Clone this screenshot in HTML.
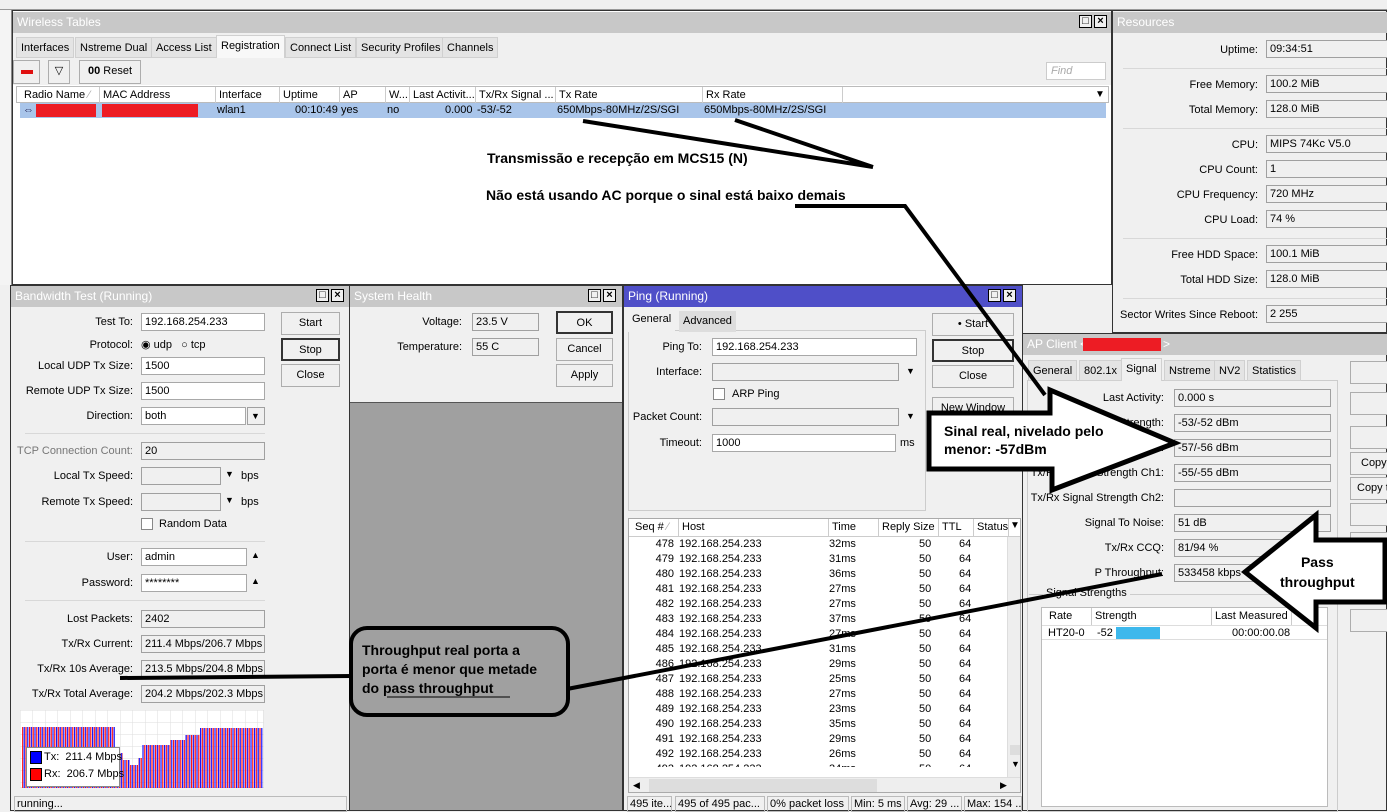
<!DOCTYPE html>
<html><head><meta charset="utf-8"><style>
*{box-sizing:border-box;margin:0;padding:0}
body{width:1387px;height:811px;position:relative;overflow:hidden;background:#f0f0f0;font-family:"Liberation Sans",sans-serif;font-size:11px;color:#000}
div,span{position:absolute;white-space:nowrap}
.t{background:#c8c8c8;color:#fff;font-size:12px;padding:3px 4px;height:21px}
.w{background:#f0f0f0}
.f{height:18px;border:1px solid #a0a0a0;background:#f0f0f0;padding:1px 3px;line-height:14px;overflow:hidden}
.fw{background:#fff;border-color:#a8a8a8}
.l{text-align:right;line-height:18px}
.b{border:1px solid #adadad;background:#f0f0f0;text-align:center;line-height:20px;height:23px}
.bd{border:2px solid #333}
.tab{border:1px solid #d0d0d0;background:#e4e4e4;height:21px;line-height:20px;padding:0 4px}
.ta{background:#f8f8f8;border-bottom:none;height:23px;top:-2px}
.sep{height:1px;background:#d8d8d8}
.hd{border-right:1px solid #ccc;padding-left:3px;line-height:16px;height:17px}
.ctl{border:1px solid #000;width:13px;height:13px;background:#f0f0f0;font-size:11px;line-height:11px;text-align:center;font-weight:bold}
.ann{font-weight:bold;font-size:14px;color:#000}
.row{height:15px;line-height:15px;left:0;width:380px}
</style></head><body>
<div style="left:0;top:0;width:1387px;height:10px;background:#f0f0f0;border-bottom:1px solid #999"></div>
<div style="left:0;top:10px;width:12px;height:275px;background:#f4f4f4;border-right:1px solid #888"></div>

<!-- Wireless Tables -->
<div style="left:12px;top:10px;width:1100px;height:275px;background:#fff;border:1px solid #333">
 <div class="t" style="left:0;top:1px;width:1098px">Wireless Tables</div>
 <div class="ctl" style="left:1066px;top:4px">□</div><div class="ctl" style="left:1081px;top:4px">×</div>
 <div class="w" style="left:0;top:22px;width:1098px;height:52px"></div>
 <div class="tab" style="left:3px;top:26px">Interfaces</div>
 <div class="tab" style="left:62px;top:26px">Nstreme Dual</div>
 <div class="tab" style="left:138px;top:26px">Access List</div>
 <div class="tab ta" style="left:203px;top:24px">Registration</div>
 <div class="tab" style="left:272px;top:26px">Connect List</div>
 <div class="tab" style="left:343px;top:26px">Security Profiles</div>
 <div class="tab" style="left:429px;top:26px">Channels</div>
 <div class="b" style="left:0;top:49px;width:27px;height:24px"><span style="left:7px;top:9px;width:12px;height:4px;background:#e01010"></span></div>
 <div class="b" style="left:35px;top:49px;width:22px;height:24px">▽</div>
 <div class="b" style="left:66px;top:49px;width:62px;height:24px"><b>00</b> Reset</div>
 <div style="left:1033px;top:51px;width:60px;height:18px;border:1px solid #ccc;background:#fff;color:#aaa;font-style:italic;padding-left:4px;line-height:16px">Find</div>
 <div style="left:3px;top:75px;width:1093px;height:17px;border:1px solid #bbb;background:#fff">
  <div class="hd" style="left:4px;width:79px">Radio Name <span style="color:#aaa;position:static">⁄</span></div>
  <div class="hd" style="left:83px;width:116px">MAC Address</div>
  <div class="hd" style="left:199px;width:64px">Interface</div>
  <div class="hd" style="left:263px;width:60px">Uptime</div>
  <div class="hd" style="left:323px;width:46px">AP</div>
  <div class="hd" style="left:369px;width:24px">W...</div>
  <div class="hd" style="left:393px;width:66px">Last Activit...</div>
  <div class="hd" style="left:459px;width:80px">Tx/Rx Signal ...</div>
  <div class="hd" style="left:539px;width:147px">Tx Rate</div>
  <div class="hd" style="left:686px;width:140px">Rx Rate</div>
  <div style="left:1078px;top:0;font-size:10px;line-height:16px">▼</div>
 </div>
 <div style="left:7px;top:92px;width:1086px;height:15px;background:#a9c5ea;line-height:15px">
  <span style="left:3px;color:#225">⇔</span>
  <span style="left:16px;top:1px;width:60px;height:13px;background:#ed1c24"></span>
  <span style="left:82px;top:1px;width:96px;height:13px;background:#ed1c24"></span>
  <span style="left:197px">wlan1</span><span style="left:275px">00:10:49</span><span style="left:321px">yes</span><span style="left:367px">no</span>
  <span style="left:425px">0.000</span><span style="left:457px">-53/-52</span><span style="left:537px">650Mbps-80MHz/2S/SGI</span><span style="left:684px">650Mbps-80MHz/2S/SGI</span>
 </div>
</div>

<!-- Resources -->
<div style="left:1112px;top:10px;width:275px;height:323px;background:#f0f0f0;border:1px solid #333">
 <div class="t" style="left:0;top:1px;width:275px">Resources</div>
 <div class="l" style="left:0;width:145px;top:30px">Uptime:</div><div class="f" style="left:153px;top:29px;width:130px">09:34:51</div>
 <div class="sep" style="left:10px;top:57px;width:265px"></div>
 <div class="l" style="left:0;width:145px;top:65px">Free Memory:</div><div class="f" style="left:153px;top:64px;width:130px">100.2 MiB</div>
 <div class="l" style="left:0;width:145px;top:90px">Total Memory:</div><div class="f" style="left:153px;top:89px;width:130px">128.0 MiB</div>
 <div class="sep" style="left:10px;top:117px;width:265px"></div>
 <div class="l" style="left:0;width:145px;top:125px">CPU:</div><div class="f" style="left:153px;top:124px;width:130px">MIPS 74Kc V5.0</div>
 <div class="l" style="left:0;width:145px;top:150px">CPU Count:</div><div class="f" style="left:153px;top:149px;width:130px">1</div>
 <div class="l" style="left:0;width:145px;top:175px">CPU Frequency:</div><div class="f" style="left:153px;top:174px;width:130px">720 MHz</div>
 <div class="l" style="left:0;width:145px;top:200px">CPU Load:</div><div class="f" style="left:153px;top:199px;width:130px">74 %</div>
 <div class="sep" style="left:10px;top:227px;width:265px"></div>
 <div class="l" style="left:0;width:145px;top:235px">Free HDD Space:</div><div class="f" style="left:153px;top:234px;width:130px">100.1 MiB</div>
 <div class="l" style="left:0;width:145px;top:260px">Total HDD Size:</div><div class="f" style="left:153px;top:259px;width:130px">128.0 MiB</div>
 <div class="sep" style="left:10px;top:287px;width:265px"></div>
 <div class="l" style="left:0;width:145px;top:295px">Sector Writes Since Reboot:</div><div class="f" style="left:153px;top:294px;width:130px">2 255</div>
</div>

<!-- Bandwidth Test -->
<div style="left:10px;top:285px;width:340px;height:526px;background:#f0f0f0;border:1px solid #333">
 <div class="t" style="left:0;top:0;width:338px">Bandwidth Test (Running)</div>
 <div class="ctl" style="left:305px;top:3px">□</div><div class="ctl" style="left:320px;top:3px">×</div>
 <div class="l" style="left:0;width:122px;top:27px">Test To:</div><div class="f fw" style="left:130px;top:27px;width:124px">192.168.254.233</div>
 <div class="l" style="left:0;width:122px;top:50px">Protocol:</div><span style="left:130px;top:52px">◉ udp &nbsp;&nbsp;○ tcp</span>
 <div class="l" style="left:0;width:122px;top:71px">Local UDP Tx Size:</div><div class="f fw" style="left:130px;top:71px;width:124px">1500</div>
 <div class="l" style="left:0;width:122px;top:96px">Remote UDP Tx Size:</div><div class="f fw" style="left:130px;top:96px;width:124px">1500</div>
 <div class="l" style="left:0;width:122px;top:121px">Direction:</div><div class="f fw" style="left:130px;top:121px;width:105px">both</div><div class="f" style="left:236px;top:121px;width:18px;font-size:9px">▼</div>
 <div class="sep" style="left:14px;top:147px;width:240px"></div>
 <div class="l" style="left:0;width:122px;top:156px;color:#777">TCP Connection Count:</div><div class="f" style="left:130px;top:156px;width:124px">20</div>
 <div class="l" style="left:0;width:122px;top:181px">Local Tx Speed:</div><div class="f" style="left:130px;top:181px;width:80px"></div><span style="left:214px;top:183px;font-size:9px">▼</span><span style="left:230px;top:184px">bps</span>
 <div class="l" style="left:0;width:122px;top:207px">Remote Tx Speed:</div><div class="f" style="left:130px;top:207px;width:80px"></div><span style="left:214px;top:209px;font-size:9px">▼</span><span style="left:230px;top:210px">bps</span>
 <span style="left:130px;top:232px;width:12px;height:12px;border:1px solid #888;background:#fff"></span><span style="left:148px;top:232px">Random Data</span>
 <div class="sep" style="left:14px;top:255px;width:240px"></div>
 <div class="l" style="left:0;width:122px;top:262px">User:</div><div class="f fw" style="left:130px;top:262px;width:106px">admin</div><span style="left:240px;top:264px;font-size:9px">▲</span>
 <div class="l" style="left:0;width:122px;top:288px">Password:</div><div class="f fw" style="left:130px;top:288px;width:106px">********</div><span style="left:240px;top:290px;font-size:9px">▲</span>
 <div class="sep" style="left:14px;top:314px;width:240px"></div>
 <div class="l" style="left:0;width:122px;top:324px">Lost Packets:</div><div class="f" style="left:130px;top:324px;width:124px">2402</div>
 <div class="l" style="left:0;width:122px;top:349px">Tx/Rx Current:</div><div class="f" style="left:130px;top:349px;width:124px">211.4 Mbps/206.7 Mbps</div>
 <div class="l" style="left:0;width:122px;top:374px">Tx/Rx 10s Average:</div><div class="f" style="left:130px;top:374px;width:124px">213.5 Mbps/204.8 Mbps</div>
 <div class="l" style="left:0;width:122px;top:399px">Tx/Rx Total Average:</div><div class="f" style="left:130px;top:399px;width:124px">204.2 Mbps/202.3 Mbps</div>
 <div class="b" style="left:270px;top:26px;width:59px">Start</div>
 <div class="b bd" style="left:270px;top:52px;width:59px">Stop</div>
 <div class="b" style="left:270px;top:78px;width:59px">Close</div>
 <svg style="position:absolute;left:9px;top:424px" width="244" height="78">
  <defs><pattern id="g" width="12.5" height="12" patternUnits="userSpaceOnUse"><path d="M0 0V12M0 0H12.5" stroke="#ddd" fill="none"/></pattern>
  <pattern id="bars" width="3.6" height="78" patternUnits="userSpaceOnUse"><rect x="0" width="1.2" height="78" fill="#1010ff"/><rect x="1.8" width="1.2" height="78" fill="#ff1010"/></pattern></defs>
  <rect width="244" height="78" fill="#fff" stroke="#ccc"/><rect width="244" height="78" fill="url(#g)"/>
  <path d="M2 78V17H95V43H103V50H110V55H118V48H122V35H150V30H165V25H180V18H243V78Z" fill="url(#bars)"/>
 </svg>
 <div style="left:15px;top:461px;width:94px;height:40px;background:#fff;border:1px solid #888">
  <span style="left:3px;top:3px;width:12px;height:13px;background:#00f;border:1px solid #000"></span><span style="left:17px;top:3px">Tx:&nbsp; 211.4 Mbps</span>
  <span style="left:3px;top:20px;width:12px;height:13px;background:#f00;border:1px solid #000"></span><span style="left:17px;top:20px">Rx:&nbsp; 206.7 Mbps</span>
 </div>
 <div style="left:3px;top:510px;width:333px;height:16px;border:1px solid #bbb;padding-left:2px;line-height:14px">running...</div>
</div>

<!-- System Health -->
<div style="left:349px;top:285px;width:274px;height:526px;background:#a0a0a0;border:1px solid #333">
 <div class="w" style="left:0;top:0;width:272px;height:117px;border-bottom:1px solid #555"></div>
 <div class="t" style="left:0;top:0;width:272px">System Health</div>
 <div class="ctl" style="left:238px;top:3px">□</div><div class="ctl" style="left:253px;top:3px">×</div>
 <div class="l" style="left:0;width:112px;top:27px">Voltage:</div><div class="f" style="left:122px;top:27px;width:67px">23.5 V</div>
 <div class="l" style="left:0;width:112px;top:52px">Temperature:</div><div class="f" style="left:122px;top:52px;width:67px">55 C</div>
 <div class="b bd" style="left:206px;top:25px;width:57px">OK</div>
 <div class="b" style="left:206px;top:52px;width:57px">Cancel</div>
 <div class="b" style="left:206px;top:78px;width:57px">Apply</div>
</div>

<!-- Ping -->
<div style="left:623px;top:285px;width:400px;height:526px;background:#f0f0f0;border:1px solid #333">
 <div class="t" style="left:0;top:0;width:398px;background:#4f4fc8">Ping (Running)</div>
 <div class="ctl" style="left:364px;top:3px">□</div><div class="ctl" style="left:379px;top:3px">×</div>
 <div style="left:4px;top:44px;width:298px;height:181px;border:1px solid #ccc"></div>
 <div class="tab ta" style="left:4px;top:23px;background:#f0f0f0;border:none">General</div>
 <div class="tab" style="left:55px;top:25px;border:none;background:#ddd">Advanced</div>
 <div class="l" style="left:0;width:78px;top:52px">Ping To:</div><div class="f fw" style="left:88px;top:52px;width:205px">192.168.254.233</div>
 <div class="l" style="left:0;width:78px;top:77px">Interface:</div><div class="f" style="left:88px;top:77px;width:187px"></div><span style="left:282px;top:80px;font-size:9px">▼</span>
 <span style="left:89px;top:102px;width:12px;height:12px;border:1px solid #888;background:#fff"></span><span style="left:108px;top:102px">ARP Ping</span>
 <div class="l" style="left:0;width:78px;top:122px">Packet Count:</div><div class="f" style="left:88px;top:122px;width:187px"></div><span style="left:282px;top:125px;font-size:9px">▼</span>
 <div class="l" style="left:0;width:78px;top:148px">Timeout:</div><div class="f fw" style="left:88px;top:148px;width:184px">1000</div><span style="left:276px;top:151px">ms</span>
 <div class="b" style="left:308px;top:27px;width:82px">• Start</div>
 <div class="b bd" style="left:308px;top:53px;width:82px">Stop</div>
 <div class="b" style="left:308px;top:79px;width:82px">Close</div>
 <div class="b" style="left:308px;top:111px;width:82px">New Window</div>
 <div style="left:4px;top:232px;width:393px;height:275px;background:#fff;border:1px solid #aaa;overflow:hidden">
  <div style="left:0;top:0;width:393px;height:18px;border-bottom:1px solid #ccc">
   <div class="hd" style="left:3px;width:47px">Seq # <span style="position:static;color:#aaa">⁄</span></div><div class="hd" style="left:50px;width:150px">Host</div><div class="hd" style="left:200px;width:50px">Time</div><div class="hd" style="left:250px;width:60px">Reply Size</div><div class="hd" style="left:310px;width:35px">TTL</div><div class="hd" style="left:345px;width:35px">Status</div><span style="left:381px;top:1px;font-size:10px">▼</span>
  </div>
  <div id="rows" style="left:0;top:18px;width:380px;height:230px;overflow:hidden"></div>
  <div style="left:378px;top:18px;width:15px;height:240px;background:#eee;border-left:1px solid #ddd"><span style="left:2px;top:208px;width:12px;height:10px;background:#ddd"></span><span style="left:3px;top:222px;font-size:9px">▼</span></div>
  <div style="left:0;top:258px;width:393px;height:17px;background:#eee;border-top:1px solid #ddd"><span style="left:4px;top:2px;font-size:9px">◀</span><span style="left:20px;top:1px;width:228px;height:14px;background:#ddd"></span><span style="left:371px;top:2px;font-size:9px">▶</span></div>
 </div>
 <div style="left:3px;top:510px;width:395px;height:16px;line-height:14px">
  <span style="left:0;width:45px;border:1px solid #bbb;height:16px;padding-left:2px;overflow:hidden">495 ite...</span>
  <span style="left:48px;width:90px;border:1px solid #bbb;height:16px;padding-left:2px">495 of 495 pac...</span>
  <span style="left:140px;width:82px;border:1px solid #bbb;height:16px;padding-left:2px">0% packet loss</span>
  <span style="left:224px;width:54px;border:1px solid #bbb;height:16px;padding-left:2px">Min: 5 ms</span>
  <span style="left:280px;width:55px;border:1px solid #bbb;height:16px;padding-left:2px;overflow:hidden">Avg: 29 ...</span>
  <span style="left:337px;width:58px;border:1px solid #bbb;height:16px;padding-left:2px;overflow:hidden">Max: 154 ...</span>
 </div>
</div>

<!-- AP Client -->
<div style="left:1022px;top:333px;width:365px;height:478px;background:#f0f0f0;border:1px solid #333">
 <div class="t" style="left:0;top:0;width:365px">AP Client &lt;<span style="left:60px;top:4px;width:78px;height:13px;background:#ed1c24"></span><span style="left:140px;top:3px">&gt;</span></div>
 <div style="left:4px;top:46px;width:311px;height:432px;border:1px solid #ccc"></div>
 <div class="tab" style="left:5px;top:26px">General</div><div class="tab" style="left:56px;top:26px">802.1x</div>
 <div class="tab ta" style="left:98px;top:24px;background:#f0f0f0">Signal</div>
 <div class="tab" style="left:141px;top:26px">Nstreme</div><div class="tab" style="left:191px;top:26px">NV2</div><div class="tab" style="left:224px;top:26px">Statistics</div>
 <div class="l" style="left:0;width:141px;top:55px">Last Activity:</div><div class="f" style="left:151px;top:55px;width:157px">0.000 s</div>
 <div class="l" style="left:0;width:141px;top:80px">Tx/Rx Signal Strength:</div><div class="f" style="left:151px;top:80px;width:157px">-53/-52 dBm</div>
 <div class="l" style="left:0;width:141px;top:105px">Signal Strength:</div><div class="f" style="left:151px;top:105px;width:157px">-57/-56 dBm</div>
 <div class="l" style="left:0;width:141px;top:130px">Tx/Rx Signal Strength Ch1:</div><div class="f" style="left:151px;top:130px;width:157px">-55/-55 dBm</div>
 <div class="l" style="left:0;width:141px;top:155px">Tx/Rx Signal Strength Ch2:</div><div class="f" style="left:151px;top:155px;width:157px"></div>
 <div class="l" style="left:0;width:141px;top:180px">Signal To Noise:</div><div class="f" style="left:151px;top:180px;width:157px">51 dB</div>
 <div class="l" style="left:0;width:141px;top:205px">Tx/Rx CCQ:</div><div class="f" style="left:151px;top:205px;width:157px">81/94 %</div>
 <div class="l" style="left:0;width:141px;top:230px">P Throughput:</div><div class="f" style="left:151px;top:230px;width:157px">533458 kbps</div>
 <div class="sep" style="left:6px;top:260px;width:300px;background:#ccc"></div>
 <span style="left:20px;top:253px;background:#f0f0f0;padding:0 3px">Signal Strengths</span>
 <div style="left:18px;top:273px;width:287px;height:200px;background:#fff;border:1px solid #bbb">
  <div class="hd" style="left:4px;width:46px">Rate</div><div class="hd" style="left:50px;width:120px">Strength</div><div class="hd" style="left:170px;width:80px">Last Measured</div>
  <div style="left:0;top:17px;width:285px;height:15px;border-top:1px solid #ddd;border-bottom:1px solid #ddd;line-height:14px"><span style="left:6px">HT20-0</span><span style="left:55px">-52</span><span style="left:74px;top:1px;width:44px;height:12px;background:#3db8ec"></span><span style="left:190px">00:00:00.08</span></div>
 </div>
 <div class="b" style="left:327px;top:27px;width:40px"></div>
 <div class="b" style="left:327px;top:58px;width:40px"></div>
 <div class="b" style="left:327px;top:92px;width:40px"></div>
 <div class="b" style="left:327px;top:118px;width:40px;text-align:left;padding-left:10px">Copy</div>
 <div class="b" style="left:327px;top:143px;width:40px;text-align:left;padding-left:6px">Copy t</div>
 <div class="b" style="left:327px;top:169px;width:40px"></div>
 <div class="b" style="left:327px;top:198px;width:40px"></div>
 <div class="b" style="left:327px;top:247px;width:40px"></div>
 <div class="b" style="left:327px;top:275px;width:40px"></div>
</div>

<!-- annotations -->
<svg style="position:absolute;left:0;top:0" width="1387" height="811">
 <path d="M583 121L873 167M735 120L873 167" stroke="#000" stroke-width="4" fill="none"/>
 <path d="M795 206H905L1045 395" stroke="#000" stroke-width="4" fill="none"/>
 <path d="M929 413H1050V390L1175 443L1052 490V469H929Z" fill="#fff" stroke="#000" stroke-width="5" stroke-linejoin="miter"/>
 <path d="M1245 572L1316 515V540H1385V602H1316V628Z" fill="#fff" stroke="#000" stroke-width="5"/>
 <path d="M120 678L352 676M567 689L1162 574" stroke="#000" stroke-width="4" fill="none"/>
 <rect x="351" y="628" width="217" height="87" rx="16" fill="#a0a0a0" stroke="#000" stroke-width="4"/>
 <path d="M387 697H510" stroke="#000" stroke-width="1"/>
</svg>
<span class="ann" style="left:487px;top:150px">Transmissão e recepção em MCS15 (N)</span>
<span class="ann" style="left:486px;top:187px">Não está usando AC porque o sinal está baixo demais</span>
<span class="ann" style="left:944px;top:422px;line-height:18px">Sinal real, nivelado pelo<br>menor: -57dBm</span>
<span class="ann" style="left:1280px;top:552px;line-height:20px;text-align:center">Pass<br>throughput</span>
<span class="ann" style="left:362px;top:641px;line-height:19px">Throughput real porta a<br>porta é menor que metade<br>do pass throughput</span>

<script>
var t=[32,31,36,27,27,37,27,31,29,25,27,23,35,29,26,34,30],h='';
for(var i=0;i<17;i++){h+='<div class="row" style="top:'+(i*15)+'px"><span style="left:0;width:45px;text-align:right">'+(478+i)+'</span><span style="left:50px">192.168.254.233</span><span style="left:200px">'+t[i]+'ms</span><span style="left:290px">50</span><span style="left:330px">64</span></div>';}
document.getElementById('rows').innerHTML=h;
</script>
</body></html>
